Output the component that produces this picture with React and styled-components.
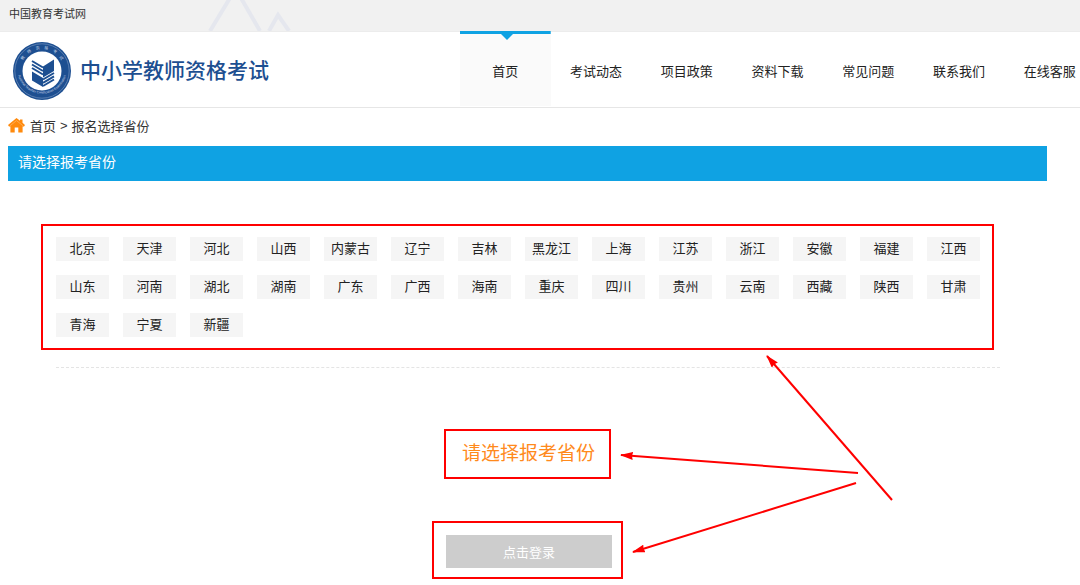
import React from "react";
import styled, { createGlobalStyle } from "styled-components";

const GlobalStyle = createGlobalStyle`
  * {
    box-sizing: border-box;
  }
  body {
    margin: 0;
    overflow-x: hidden;
    background-color: #fff;
    color: #333;
    font-family: "Liberation Sans", "Noto Sans CJK SC", sans-serif;
    font-size: 13px;
  }
  a {
    color: inherit;
    text-decoration: none;
  }
`;
const TopBar = styled.div`
  display: flex;
  height: 32px;
  padding: 0 9px;
  background-color: #f1f1f1;
  border-bottom: 1px solid #ececec;
  font-size: 11px;
  line-height: 28px;
`;
const Mountains = styled.svg`
  width: 84px;
  height: 31px;
  margin-left: 121px;
`;
const Header = styled.header`
  display: flex;
  height: 76px;
  border-bottom: 1px solid #e6e6e6;
`;
const Logo = styled.a`
  display: flex;
  flex: none;
  align-items: center;
  gap: 8px;
  width: 460px;
  padding: 3px 0 0 12px;
  color: #1d4f91;
  font-size: 21px;
`;
const LogoText = styled.span`
  padding-bottom: 4px;
  font-weight: 500;
`;
const Nav = styled.nav`
  display: flex;
  flex: none;
  width: 635px;
`;
const NavLink = styled.a`
  position: relative;
  flex: 1;
  height: 74px;
  color: #222;
  line-height: 80px;
  text-align: center;
  background-color: ${(props) => (props.$active ? "#fafafa" : "transparent")};
`;
const ActiveMark = styled.svg`
  position: absolute;
  top: -1px;
  left: 0;
  width: 100%;
  height: 9px;
`;
const Content = styled.main`
  margin: 0 33px 0 8px;
`;
const Breadcrumb = styled.div`
  display: flex;
  align-items: center;
  gap: 4px;
  height: 38px;
  padding-bottom: 4px;
`;
const HomeIcon = styled.svg`
  width: 17px;
  height: 15px;
  margin-right: 1px;
`;
const Title = styled.h1`
  height: 35px;
  margin: 0;
  padding: 0 10px;
  background-color: #0fa2e3;
  color: #fff;
  font-size: 14px;
  font-weight: 400;
  line-height: 32px;
`;
const Picker = styled.section`
  position: relative;
  display: flex;
  flex-direction: column;
  align-items: center;
  padding-top: 43px;
`;
const Frame = styled.div`
  border: 2px solid #ff0000;
`;
const ProvinceFrame = styled(Frame)`
  display: grid;
  grid-template-columns: repeat(14, 1fr);
  gap: 14px;
  align-self: stretch;
  margin: 0 53px 0 33px;
  padding: 11px 12px 11px 13px;
`;
const Province = styled.a`
  height: 24px;
  background-color: #f5f5f5;
  color: #222;
  line-height: 24px;
  text-align: center;
  white-space: nowrap;
`;
const Divider = styled.hr`
  align-self: stretch;
  margin: 17px 47px 61px 48px;
  border: 0;
  border-top: 1px dashed #e4e4e4;
`;
const HintFrame = styled(Frame)`
  padding: 0 14px 0 16px;
  color: #ff8a1c;
  font-size: 19px;
  line-height: 46px;
`;
const LoginFrame = styled(Frame)`
  margin-top: 42px;
  padding: 12px 9px 9px 12px;
`;
const LoginButton = styled.button`
  display: block;
  width: 166px;
  height: 33px;
  padding: 0;
  border: 0;
  background-color: #cdcdcd;
  color: #fff;
  font: inherit;
`;
const Arrows = styled.svg`
  position: absolute;
  top: 169px;
  left: 607px;
  width: 280px;
  height: 210px;
`;

const menu = [
  "首页",
  "考试动态",
  "项目政策",
  "资料下载",
  "常见问题",
  "联系我们",
  "在线客服",
];

const provinces = [
  "北京", "天津", "河北", "山西", "内蒙古", "辽宁", "吉林",
  "黑龙江", "上海", "江苏", "浙江", "安徽", "福建", "江西",
  "山东", "河南", "湖北", "湖南", "广东", "广西", "海南",
  "重庆", "四川", "贵州", "云南", "西藏", "陕西", "甘肃",
  "青海", "宁夏", "新疆",
];

const Emblem = () => (
  <svg width="60" height="60" viewBox="0 0 60 60" aria-hidden="true">
    <defs>
      <path id="ringTop" d="M8.6 34 A21.8 21.8 0 1 1 51.4 34" />
      <path id="ringBottom" d="M5.4 31 A24.8 24.8 0 0 0 54.6 31" />
    </defs>
    <circle cx="30" cy="30" r="29" fill="#1d4f91" />
    <circle cx="30" cy="30" r="27.2" fill="none" stroke="#7f9cc4" strokeWidth="0.6" />
    <circle cx="30" cy="30" r="19.5" fill="#fff" />
    <text fill="#c5d3e6" fontSize="4" textAnchor="middle">
      <textPath href="#ringTop" startOffset="50%">
        教&#160;&#160;&#160;&#160;师&#160;&#160;&#160;&#160;资&#160;&#160;&#160;&#160;格&#160;&#160;&#160;&#160;考&#160;&#160;&#160;&#160;试
      </textPath>
    </text>
    <text fill="#c5d3e6" fontSize="3.4" textAnchor="middle">
      <textPath href="#ringBottom" startOffset="50%">
        National Teacher Certification Examination
      </textPath>
    </text>
    <g fill="#1d4f91">
      <path d="M42 18.5 L31 25.5 V36.5 L42 30Z" />
      <path d="M20 30.5 L31 37 V46 L20 39.5Z" />
    </g>
    <g stroke="#1d4f91" strokeWidth="2">
      <path d="M20 20 L31 26.5 M20 23.5 L31 30 M20 27 L31 33.5" />
      <path d="M31 38.5 L42 32 M31 41.8 L42 35.3 M31 45 L42 38.5" />
    </g>
  </svg>
);

const App = () => {
  return (
    <>
      <GlobalStyle />
      <TopBar>
        <a href="#neea">中国教育考试网</a>
        <Mountains viewBox="0 0 84 31" fill="none" stroke="#e5e7ee" strokeWidth="4">
          <path d="M3 31 L23 -2 M34 -2 L53 31 M62 31 L71 15 L82 31" />
        </Mountains>
      </TopBar>
      <Header>
        <Logo href="#home">
          <Emblem />
          <LogoText>中小学教师资格考试</LogoText>
        </Logo>
        <Nav>
          {menu.map((name, i) => (
            <NavLink key={name} href="#nav" $active={i === 0}>
              {i === 0 && (
                <ActiveMark>
                  <rect width="100%" height="3" fill="#0fa2e3" />
                  <path d="M41 3 H53 L47 9Z" fill="#0fa2e3" />
                </ActiveMark>
              )}
              {name}
            </NavLink>
          ))}
        </Nav>
      </Header>
      <Content>
        <Breadcrumb>
          <HomeIcon viewBox="0 0 17 15" fill="#ff8a0d">
            <path d="M8.5 0 L12 2.8 V1.5 H14.5 V4.8 L17 7 L16 8.4 H14.6 V14.5 H10.3 V9.5 H6.7 V14.5 H2.4 V8.4 H1 L0 7Z" />
            <path d="M2 7.8 L8.5 2.6 L15 7.8" fill="none" stroke="#ffc17d" strokeWidth="0.6" />
          </HomeIcon>
          <a href="#home">首页</a>
          <span>&gt;</span>
          <span>报名选择省份</span>
        </Breadcrumb>
        <Title>请选择报考省份</Title>
        <Picker>
          <ProvinceFrame>
            {provinces.map((name) => (
              <Province key={name} href="#province">
                {name}
              </Province>
            ))}
          </ProvinceFrame>
          <Divider />
          <HintFrame>请选择报考省份</HintFrame>
          <LoginFrame>
            <LoginButton type="button">点击登录</LoginButton>
          </LoginFrame>
          <Arrows viewBox="615 350 280 210" stroke="#ff0000" strokeWidth="2">
            <defs>
              <marker
                id="head"
                markerUnits="userSpaceOnUse"
                markerWidth="13"
                markerHeight="8"
                refX="1"
                refY="4"
                orient="auto"
              >
                <path d="M0 4 L13 0 L12 4 L13 8Z" fill="#ff0000" stroke="none" />
              </marker>
            </defs>
            <path d="M767 356 L892 500" markerStart="url(#head)" />
            <path d="M621 455 L858 473" markerStart="url(#head)" />
            <path d="M633 552 L856 483" markerStart="url(#head)" />
          </Arrows>
        </Picker>
      </Content>
    </>
  );
};

export default App;
